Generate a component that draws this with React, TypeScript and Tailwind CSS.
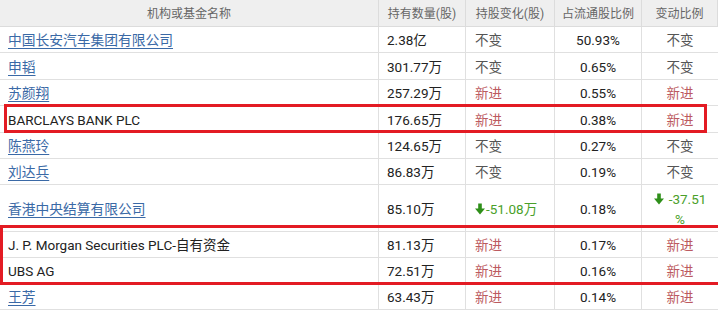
import React from "react";

type Change = { kind: "same" } | { kind: "new" } | { kind: "down"; value: string };

type Row = {
  name: string;
  link: boolean;
  amount: string;
  unit: string;
  change: Change;
  ratio: string;
  rateChange: Change;
  h: string;
};

const rows: Row[] = [
  { name: "中国长安汽车集团有限公司", link: true, amount: "2.38", unit: "亿", change: { kind: "same" }, ratio: "50.93%", rateChange: { kind: "same" }, h: "h-[26px]" },
  { name: "申韬", link: true, amount: "301.77", unit: "万", change: { kind: "same" }, ratio: "0.65%", rateChange: { kind: "same" }, h: "h-[27px]" },
  { name: "苏颜翔", link: true, amount: "257.29", unit: "万", change: { kind: "new" }, ratio: "0.55%", rateChange: { kind: "new" }, h: "h-[26px]" },
  { name: "BARCLAYS BANK PLC", link: false, amount: "176.65", unit: "万", change: { kind: "new" }, ratio: "0.38%", rateChange: { kind: "new" }, h: "h-[27px]" },
  { name: "陈燕玲", link: true, amount: "124.65", unit: "万", change: { kind: "same" }, ratio: "0.27%", rateChange: { kind: "same" }, h: "h-[26px]" },
  { name: "刘达兵", link: true, amount: "86.83", unit: "万", change: { kind: "same" }, ratio: "0.19%", rateChange: { kind: "same" }, h: "h-[26px]" },
  { name: "香港中央结算有限公司", link: true, amount: "85.10", unit: "万", change: { kind: "down", value: "-51.08万" }, ratio: "0.18%", rateChange: { kind: "down", value: "-37.51%" }, h: "h-[47px]" },
  { name: "J. P. Morgan Securities PLC-自有资金", link: false, amount: "81.13", unit: "万", change: { kind: "new" }, ratio: "0.17%", rateChange: { kind: "new" }, h: "h-[26px]" },
  { name: "UBS AG", link: false, amount: "72.51", unit: "万", change: { kind: "new" }, ratio: "0.16%", rateChange: { kind: "new" }, h: "h-[26px]" },
  { name: "王芳", link: true, amount: "63.43", unit: "万", change: { kind: "new" }, ratio: "0.14%", rateChange: { kind: "new" }, h: "h-[26px]" },
];

const cols = "grid grid-cols-[379px_87px_89px_87px_76px]";

function DownArrow() {
  return (
    <svg width="10" height="12" viewBox="0 0 10 12" className="inline-block shrink-0">
      <rect x="3.2" y="0.5" width="3.6" height="6" fill="#2f8f1a" />
      <path d="M0 5.5 L10 5.5 L5 11.5 Z" fill="#2f8f1a" />
    </svg>
  );
}

function ChangeText({ change, wrap }: { change: Change; wrap?: boolean }) {
  if (change.kind === "same") return <span className="text-[#555]">不变</span>;
  if (change.kind === "new") return <span className="text-[#bc5a60]">新进</span>;
  if (wrap) {
    // narrow column: percent sign drops to a second line
    return (
      <span className="flex flex-col items-center leading-[20px] text-[#4a9f2a]">
        <span className="flex items-center gap-[5px]">
          <DownArrow />
          {change.value.replace("%", "")}
        </span>
        <span>%</span>
      </span>
    );
  }
  return (
    <span className="flex items-center gap-[1px] text-[#4a9f2a]">
      <DownArrow />
      {change.value}
    </span>
  );
}

export default function App() {
  return (
    <div className="relative w-[718px] h-[312px] overflow-hidden bg-white font-['Roboto','Noto_Sans_CJK_SC',sans-serif] text-[13.5px] text-[#222]">
      {/* Header */}
      <div className={`${cols} h-[27px] bg-[#efefef] text-[12px] text-[#666]`}>
        {["机构或基金名称", "持有数量(股)", "持股变化(股)", "占流通股比例", "变动比例"].map((t) => (
          <div key={t} className="flex items-center justify-center border-b border-r border-[#dcdcdc] pt-[2px]">
            {t}
          </div>
        ))}
      </div>

      {/* Rows */}
      {rows.map((r) => (
        <div key={r.name} className={`${cols} ${r.h}`}>
          <div className="flex items-center border-b border-r border-[#e0e0e0] px-2 pt-[2px]">
            {r.link ? (
              <a href="#" className="text-[13.75px] text-[#3a69a6] underline underline-offset-[3px] decoration-[#3a69a6]">
                {r.name}
              </a>
            ) : (
              <span className="text-[#222]">{r.name}</span>
            )}
          </div>
          <div className="flex items-center border-b border-r border-[#e0e0e0] px-2 pt-[2px]">
            {r.amount}
            {r.unit}
          </div>
          <div className="flex items-center border-b border-r border-[#e0e0e0] pl-[9px] pt-[2px]">
            <ChangeText change={r.change} />
          </div>
          <div className="flex items-center justify-center border-b border-r border-[#e0e0e0] pt-[2px]">{r.ratio}</div>
          <div className="flex items-center justify-center border-b border-[#e0e0e0] pt-[2px]">
            <ChangeText change={r.rateChange} wrap />
          </div>
        </div>
      ))}

      {/* Highlight boxes */}
      <div className="absolute left-[4px] top-[104px] w-[703px] h-[29px] border-[3px] border-[#e31b23]" />
      <div className="absolute left-0 top-[225px] w-[740px] h-[60px] border-[3px] border-[#e31b23]" />
    </div>
  );
}
